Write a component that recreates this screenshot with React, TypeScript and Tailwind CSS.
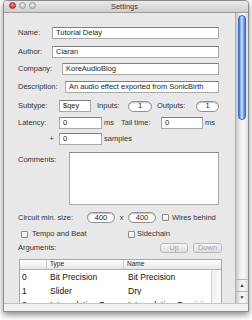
import React from 'react';

// ─── Small pieces ─────────────────────────────────────────────────────────────

function Field({ value, className = '' }: { value?: string; className?: string }) {
    return (
        <div
            className={`h-[12px] bg-white border border-[#a9a9a9] border-t-[#7f7f7f] px-[3px] flex items-center text-[#1e1e1e] whitespace-nowrap overflow-hidden ${className}`}
        >
            {value}
        </div>
    );
}

function RoundField({ value, className = '' }: { value: string; className?: string }) {
    return (
        <div
            className={`h-[11px] bg-white border border-[#8e8e8e] rounded-full flex items-center justify-center text-[#1e1e1e] shadow-[inset_0_1px_1px_rgba(0,0,0,0.25)] ${className}`}
        >
            {value}
        </div>
    );
}

function Check() {
    return (
        <div className="w-[7px] h-[7px] border border-[#8a8a8a] rounded-[1px] bg-[linear-gradient(#ffffff,#e9e9e9)] shrink-0" />
    );
}

function Light({ color }: { color: string }) {
    return <div className={`w-[7px] h-[7px] rounded-full border ${color}`} />;
}

const rows = [
    ['0', 'Bit Precision', 'Bit Precision'],
    ['1', 'Slider', 'Dry'],
    ['2', 'Interpolation Prec', 'Interpolation Precisi'],
];

// ─── Component ────────────────────────────────────────────────────────────────

export default function App() {
    return (
        <div className="w-[252px] h-[320px] bg-white overflow-hidden font-['Liberation_Sans',Arial,sans-serif] text-[7.5px] leading-none text-[#333]">
            <div className="ml-[3px] w-[246px] h-[312px] flex flex-col border border-[#8a8a8a] rounded-t-[4px] bg-[#e8e8e8] shadow-[0_3px_6px_rgba(0,0,0,0.45)] overflow-hidden">
                {/* Title bar */}
                <div className="relative h-[12px] shrink-0 flex items-center justify-center bg-[linear-gradient(#e9e9e9,#cfcfcf)] border-b border-[#9c9c9c]">
                    <div className="absolute left-[5px] top-[1px] flex gap-[3px]">
                        <Light color="bg-[radial-gradient(circle_at_50%_35%,#f39a90,#d2362c_70%)] border-[#9b2a22]" />
                        <Light color="bg-[radial-gradient(circle_at_50%_35%,#f4f4f4,#c5c5c5_70%)] border-[#9a9a9a]" />
                        <Light color="bg-[radial-gradient(circle_at_50%_35%,#f4f4f4,#c5c5c5_70%)] border-[#9a9a9a]" />
                    </div>
                    <span className="text-[#3a3a3a] -ml-[3px]">Settings</span>
                </div>

                {/* Body */}
                <div className="flex-1 min-h-0 flex">
                    <div className="flex-1 min-w-0 overflow-hidden pl-[14px] pr-[13px] pt-[14px]">
                        <div className="flex items-center h-[12px] mr-[3px]">
                            <span className="w-[34px] shrink-0">Name:</span>
                            <Field value="Tutorial Delay" className="flex-1" />
                        </div>
                        <div className="flex items-center h-[12px] mt-[7px] mr-[3px]">
                            <span className="w-[34px] shrink-0">Author:</span>
                            <Field value="Ciaran" className="flex-1" />
                        </div>
                        <div className="flex items-center h-[12px] mt-[5px] mr-[3px]">
                            <span className="w-[44px] shrink-0">Company:</span>
                            <Field value="KoreAudioBlog" className="flex-1" />
                        </div>
                        <div className="flex items-center h-[12px] mt-[6px] mr-[3px]">
                            <span className="w-[47px] shrink-0">Description:</span>
                            <Field value="An audio effect exported from SonicBirth" className="flex-1" />
                        </div>
                        <div className="flex items-center h-[12px] mt-[7px] mr-[3px]">
                            <span className="w-[41px] shrink-0">Subtype:</span>
                            <Field value="$qey" className="w-[32px]" />
                            <span className="w-[37px] pl-[6px] shrink-0">Inputs:</span>
                            <RoundField value="1" className="w-[24px]" />
                            <span className="w-[44px] pl-[5px] shrink-0">Outputs:</span>
                            <RoundField value="1" className="flex-1" />
                        </div>
                        <div className="flex items-center h-[12px] mt-[5px]">
                            <span className="w-[41px] shrink-0">Latency:</span>
                            <Field value="0" className="w-[43px]" />
                            <span className="w-[19px] pl-[2px] shrink-0">ms</span>
                            <span className="w-[40px] shrink-0">Tail time:</span>
                            <Field value="0" className="w-[42px]" />
                            <span className="pl-[2px]">ms</span>
                        </div>
                        <div className="flex items-center h-[12px] mt-[4px]">
                            <span className="w-[41px] pr-[5px] text-right shrink-0">+</span>
                            <Field value="0" className="w-[43px]" />
                            <span className="pl-[2px]">samples</span>
                        </div>
                        <div className="flex mt-[7px] mr-[3px]">
                            <span className="w-[51px] shrink-0 pt-[4px]">Comments:</span>
                            <div className="flex-1 h-[53px] bg-white border border-[#a9a9a9] border-t-[#8a8a8a]" />
                        </div>
                        <div className="flex items-center h-[11px] mt-[7px]">
                            <span className="w-[69px] shrink-0">Circuit min. size:</span>
                            <RoundField value="400" className="w-[28px]" />
                            <span className="w-[13px] text-center shrink-0">x</span>
                            <RoundField value="400" className="w-[28px]" />
                            <span className="ml-[6px]"><Check /></span>
                            <span className="ml-[3px]">Wires behind</span>
                        </div>
                        <div className="flex items-center h-[8px] mt-[7px]">
                            <div className="w-[110px] pl-[3px] flex items-center shrink-0">
                                <Check />
                                <span className="ml-[4px]">Tempo and Beat</span>
                            </div>
                            <Check />
                            <span className="ml-[2px]">Sidechain</span>
                        </div>
                        <div className="flex items-center h-[10px] mt-[5px]">
                            <span className="flex-1">Arguments:</span>
                            <div className="w-[28px] h-[10px] rounded-[3px] border border-[#b9b9b9] bg-[linear-gradient(#f7f7f7,#dedede)] flex items-center justify-center text-[#a2a2a2]">
                                Up
                            </div>
                            <div className="ml-[5px] w-[29px] h-[10px] rounded-[3px] border border-[#b9b9b9] bg-[linear-gradient(#f7f7f7,#dedede)] flex items-center justify-center text-[#a2a2a2]">
                                Down
                            </div>
                        </div>

                        {/* Arguments table */}
                        <div className="mt-[6px] ml-[1px] w-[203px] bg-white border border-[#a8a8a8] flex">
                            <div className="flex-1 min-w-0">
                                <div className="h-[10px] flex items-center text-[6.5px] text-[#222] bg-[linear-gradient(#ffffff,#e6e6e6)] border-b border-[#b3b3b3]">
                                    <span className="w-[27px] h-full border-r border-[#cfcfcf]" />
                                    <span className="w-[77px] pl-[3px] h-full flex items-center border-r border-[#cfcfcf]">Type</span>
                                    <span className="flex-1 pl-[3px]">Name</span>
                                </div>
                                {rows.map((r) => (
                                    <div key={r[0]} className="h-[14px] flex items-center text-[8.5px] text-[#111] whitespace-nowrap overflow-hidden">
                                        <span className="w-[27px] pl-[2px] shrink-0">{r[0]}</span>
                                        <span className="w-[77px] pl-[3px] shrink-0 overflow-hidden">{r[1]}</span>
                                        <span className="flex-1 pl-[4px] overflow-hidden">{r[2]}</span>
                                    </div>
                                ))}
                            </div>
                            <div className="w-[10px] shrink-0 flex flex-col">
                                <div className="h-[10px] bg-[linear-gradient(#ffffff,#e6e6e6)] border-b border-[#b3b3b3]" />
                                <div className="flex-1 border-l border-[#d6d6d6] bg-[linear-gradient(to_right,#f0f0f0,#fbfbfb)]" />
                            </div>
                        </div>
                    </div>

                    {/* Vertical scroller */}
                    <div className="w-[13px] shrink-0 flex flex-col border-l border-[#b0b0b0] bg-[linear-gradient(to_right,#c9c9c9,#eeeeee_35%,#f8f8f8_65%,#dcdcdc)]">
                        <div className="flex-1 pt-[2px] px-[2px]">
                            <div className="h-[105px] rounded-full border border-[#3a68b8] bg-[linear-gradient(to_right,#3d6fc8,#94b9ef_28%,#d3e3f9_48%,#86aeeb_72%,#4074cc)]" />
                        </div>
                        <div className="h-[12px] flex items-center justify-center border-t border-[#b8b8b8] text-[5px] text-[#333]">
                            ▲
                        </div>
                        <div className="h-[12px] flex items-center justify-center border-t border-[#b8b8b8] text-[5px] text-[#333]">
                            ▼
                        </div>
                    </div>
                </div>

                {/* Bottom bar */}
                <div className="h-[8px] shrink-0 bg-[#f1f1f1] border-t border-[#c4c4c4]" />
            </div>
        </div>
    );
}
